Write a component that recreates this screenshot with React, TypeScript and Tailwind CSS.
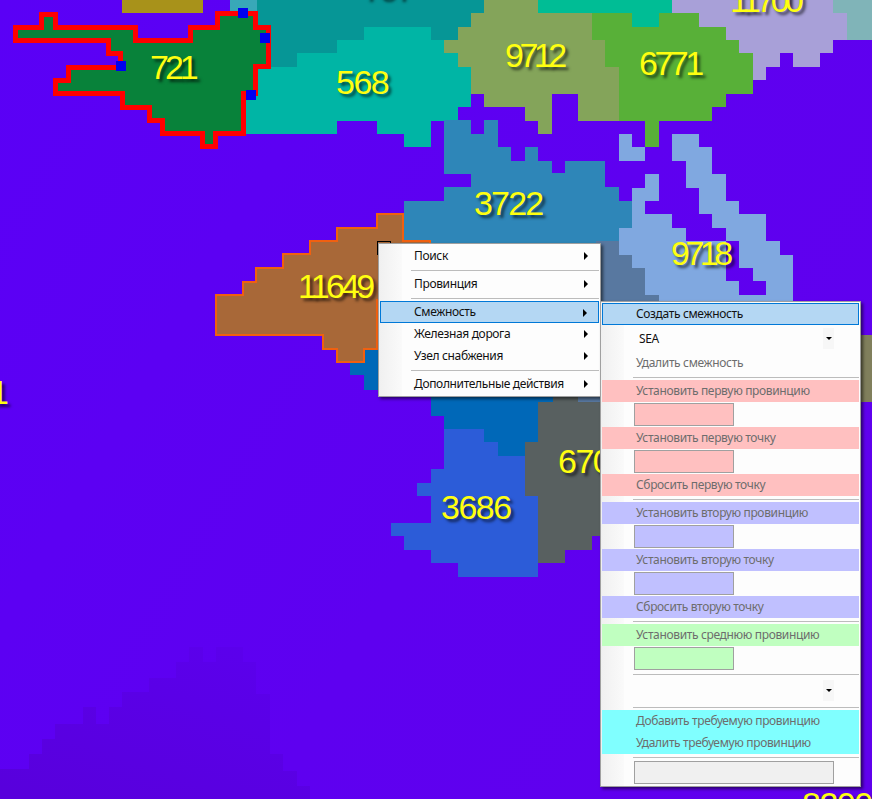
import type { ReactNode } from "react";

const regions = [
  { fill: "url(#seaShade)", points: "0,769 29,769 29,754 42,754 42,739 55,739 55,724 83,724 83,707 96,707 96,724 109,724 109,707 122,707 122,692 149,692 149,678 176,678 176,662 189,662 189,647 203,647 203,662 216,662 216,647 243,647 243,662 256,662 256,694 270,694 270,754 283,754 283,771 297,771 297,786 310,786 310,799 0,799" },
  { fill: "#a8921a", points: "122,0 203,0 203,13 122,13" },
  { fill: "#38a8b8", points: "230,0 257,0 257,13 230,13" },
  { fill: "#069696", points: "257,0 484,0 484,13 471,13 471,27 458,27 458,40 431,40 431,27 364,27 364,40 337,40 337,53 297,53 297,67 255,67 255,13 257,13" },
  { fill: "#00b5a5", points: "364,27 431,27 431,40 444,40 444,53 458,53 458,67 471,67 471,107 458,107 458,121 431,121 431,147 404,147 404,134 377,134 377,121 337,121 337,134 246,134 246,67 297,67 297,53 337,53 337,40 364,40" },
  { fill: "#00bd95", points: "538,0 672,0 672,13 659,13 659,27 632,27 632,13 538,13" },
  { fill: "#84a45a", points: "484,0 538,0 538,13 592,13 592,40 605,40 605,67 619,67 619,121 578,121 578,94 552,94 552,134 538,134 538,121 525,121 525,107 484,107 484,94 471,94 471,67 458,67 458,53 444,53 444,40 458,40 458,27 471,27 471,13 484,13" },
  { fill: "#58b038", points: "592,13 632,13 632,27 659,27 659,13 699,13 699,27 726,27 726,40 739,40 739,53 753,53 753,94 726,94 726,107 712,107 712,121 659,121 659,147 645,147 645,121 619,121 619,67 605,67 605,40 592,40" },
  { fill: "#a8a0d8", points: "672,0 833,0 833,13 847,13 847,40 833,40 833,53 820,53 820,67 793,67 793,53 780,53 780,67 766,67 766,80 753,80 753,53 739,53 739,40 726,40 726,27 699,27 699,13 672,13" },
  { fill: "#80b4b8", points: "833,0 872,0 872,40 847,40 847,13 833,13" },
  { fill: "#807f5c", points: "860,335 872,335 872,402 860,402" },
  { fill: "#2e86b8", points: "444,120 471,120 471,134 484,134 484,120 498,120 498,147 511,147 511,161 525,161 525,147 538,147 538,161 552,161 552,173 565,173 565,161 605,161 605,187 619,187 619,201 632,201 632,228 619,228 619,260 404,260 404,201 444,201 444,187 471,187 471,174 444,174" },
  { fill: "#80a8e0", points: "619,134 632,134 632,147 645,147 645,161 619,161" },
  { fill: "#80a8e0", points: "672,134 699,134 699,147 712,147 712,174 726,174 726,201 739,201 739,214 766,214 766,241 780,241 780,255 793,255 793,310 659,310 659,295 645,295 645,268 632,268 632,255 619,255 619,228 632,228 632,188 645,188 645,174 659,174 659,201 645,201 645,214 672,214 672,228 686,228 686,241 726,241 726,281 739,281 739,295 766,295 766,281 753,281 753,268 739,268 739,241 726,241 726,228 712,228 712,214 699,214 699,188 686,188 686,161 672,161" },
  { fill: "#5878a0", points: "596,241 619,241 619,255 632,255 632,268 645,268 645,295 659,295 659,310 596,310" },
  { fill: "#0068b8", points: "365,349 380,349 380,397 553,397 553,402 538,402 538,442 525,442 525,456 498,456 498,442 484,442 484,429 444,429 444,416 431,416 431,390 364,390 364,375 350,375 350,362 365,362" },
  { fill: "#586060", points: "553,395 605,395 605,536 592,536 592,550 565,550 565,563 538,563 538,496 525,496 525,442 538,442 538,402 553,402" },
  { fill: "#5878a0", points: "578,390 605,390 605,402 578,402" },
  { fill: "#2c5cd8", points: "444,429 484,429 484,442 498,442 498,456 525,456 525,496 538,496 538,577 458,577 458,563 431,563 431,550 404,550 404,536 391,536 391,523 431,523 431,496 417,496 417,483 431,483 431,469 444,469" },
];

const labels = [
  { text: "797", className: "left-[361px] top-[-30px] tracking-[-2.5px]" },
  { text: "11700", className: "left-[730px] top-[-17px] tracking-[-4.5px]" },
  { text: "721", className: "left-[150px] top-[50px] tracking-[-4px]" },
  { text: "568", className: "left-[336px] top-[65px] tracking-[-1.5px]" },
  { text: "9712", className: "left-[505px] top-[38px] tracking-[-4.5px]" },
  { text: "6771", className: "left-[639px] top-[46px] tracking-[-3.5px]" },
  { text: "3722", className: "left-[474px] top-[186px] tracking-[-1.8px]" },
  { text: "9718", className: "left-[671px] top-[236px] tracking-[-4.5px]" },
  { text: "11649", className: "left-[298px] top-[269px] tracking-[-3.7px]" },
  { text: "1", className: "left-[-10px] top-[375px]" },
  { text: "670", className: "left-[558px] top-[444px] tracking-[-1.5px]" },
  { text: "3686", className: "left-[441px] top-[490px] tracking-[-1.5px]" },
  { text: "8200", className: "left-[802px] top-[787px] tracking-[-1.5px]" },
];

function MapCanvas() {
  return (
    <>
      <svg width="872" height="799" viewBox="0 0 872 799" className="absolute left-0 top-0" shapeRendering="crispEdges">
        <defs>
          <linearGradient id="seaShade" x1="0.8" y1="0" x2="0.1" y2="1">
            <stop offset="0" stopColor="#5b00ec" />
            <stop offset="1" stopColor="#5800dc" />
          </linearGradient>
        </defs>
        {regions.map((r, i) => (
          <polygon key={i} points={r.points} fill={r.fill} />
        ))}
        <polygon
          points="216,295 243,295 243,282 256,282 256,268 283,268 283,254 310,254 310,241 337,241 337,228 377,228 377,214 403,214 403,241 430,241 430,300 377,300 377,349 364,349 364,362 337,362 337,349 323,349 323,335 216,335"
          fill="#a86838"
          stroke="#f06010"
          strokeWidth="2"
        />
        <polygon
          points="15,27 41,27 41,14 55,14 55,27 135,27 135,40 190,40 190,27 217,27 217,13 255,13 255,27 268,27 268,66 255,66 255,93 243,93 243,133 215,133 215,146 202,146 202,133 162,133 162,120 149,120 149,107 122,107 122,93 55,93 55,80 68,80 68,67 120,67 120,53 108,53 108,40 15,40"
          fill="#08823a"
          stroke="#ff0000"
          strokeWidth="5"
        />
        <rect x="238" y="8" width="10" height="10" fill="#0000f0" />
        <rect x="260" y="33" width="10" height="10" fill="#0000f0" />
        <rect x="116" y="61" width="10" height="10" fill="#0000f0" />
        <rect x="246" y="90" width="10" height="10" fill="#0000f0" />
        <rect x="377.5" y="241.5" width="13" height="13" fill="none" stroke="#000000" />
      </svg>
      {labels.map((l) => (
        <span
          key={l.text}
          className={`absolute font-['Liberation_Sans',Arial,sans-serif] text-[34px] leading-none text-[#ffff10] [text-shadow:3px_3px_3px_rgba(0,0,0,0.6)] ${l.className}`}
        >
          {l.text}
        </span>
      ))}
    </>
  );
}

function Arrow() {
  return (
    <svg width="4" height="8" viewBox="0 0 4 8" className="absolute right-[11px] top-[7px]">
      <path d="M0 0 L4 4 L0 8 Z" fill="#000000" />
    </svg>
  );
}

function Sep() {
  return (
    <div className="h-[6px] flex items-center pl-[31px]">
      <div className="h-px w-full bg-[#bcbcbc]" />
    </div>
  );
}

function Item({ children, className = "text-[#6d6d6d]" }: { children: ReactNode; className?: string }) {
  return <div className={`h-[22px] pl-[34px] leading-[21px] ${className}`}>{children}</div>;
}

function SubItem({ children, active }: { children: ReactNode; active?: boolean }) {
  return (
    <div
      className={`relative h-[22px] text-[#111111] ${
        active ? "border border-[#0078d7] bg-[#b4d7f3] pl-[33px] leading-[19px]" : "pl-[34px] leading-[21px]"
      }`}
    >
      {children}
      <Arrow />
    </div>
  );
}

function Field({ className }: { className: string }) {
  return (
    <div className="h-[25px] py-px pl-[32px]">
      <div className={`h-[23px] w-[100px] border border-[#a0a0a0] ${className}`} />
    </div>
  );
}

function Combo({ value }: { value?: string }) {
  return (
    <div className="h-[27px] py-[2px] pl-[32px]">
      <div className="flex h-[23px] w-[200px] items-center justify-between">
        <span className="pl-[5px] text-[#111111]">{value}</span>
        <span className="flex h-[21px] w-[11px] items-center justify-center bg-[#f7f7f7]">
          <svg width="6" height="3" viewBox="0 0 6 3">
            <path d="M0 0 L6 0 L3 3 Z" fill="#000000" />
          </svg>
        </span>
      </div>
    </div>
  );
}

const menuClass =
  "absolute border border-[#a0a0a0] bg-[linear-gradient(to_right,#f0f0f0,#fafafa_23px,#fdfdfd_23px)] p-px font-['Noto_Sans',sans-serif] text-[12px] tracking-[-0.35px] shadow-[2px_2px_3px_rgba(0,0,0,0.55)]";

export default function App() {
  return (
    <div className="relative h-[799px] w-[872px] overflow-hidden bg-[linear-gradient(120deg,#5a00f6,#5e00f0_55%,#6000ed)]">
      <MapCanvas />

      <div className={`${menuClass} left-[378px] top-[243px] h-[154px] w-[223px]`}>
        <SubItem>Поиск</SubItem>
        <Sep />
        <SubItem>Провинция</SubItem>
        <Sep />
        <SubItem active>Смежность</SubItem>
        <SubItem>Железная дорога</SubItem>
        <SubItem>Узел снабжения</SubItem>
        <Sep />
        <SubItem>Дополнительные действия</SubItem>
      </div>

      <div className={`${menuClass} left-[600px] top-[301px] h-[486px] w-[261px]`}>
        <div className="h-[22px] border border-[#0078d7] bg-[#b4d7f3] pl-[33px] leading-[19px] text-[#111111]">Создать смежность</div>
        <Combo value="SEA" />
        <Item>Удалить смежность</Item>
        <Sep />
        <Item className="bg-[#ffc0c0] text-[#6d6d6d]">Установить первую провинцию</Item>
        <Field className="bg-[#ffc0c0]" />
        <Item className="bg-[#ffc0c0] text-[#6d6d6d]">Установить первую точку</Item>
        <Field className="bg-[#ffc0c0]" />
        <Item className="bg-[#ffc0c0] text-[#6d6d6d]">Сбросить первую точку</Item>
        <Sep />
        <Item className="bg-[#c0c0ff] text-[#6d6d6d]">Установить вторую провинцию</Item>
        <Field className="bg-[#c0c0ff]" />
        <Item className="bg-[#c0c0ff] text-[#6d6d6d]">Установить вторую точку</Item>
        <Field className="bg-[#c0c0ff]" />
        <Item className="bg-[#c0c0ff] text-[#6d6d6d]">Сбросить вторую точку</Item>
        <Sep />
        <Item className="bg-[#c0ffc0] text-[#6d6d6d]">Установить среднюю провинцию</Item>
        <Field className="bg-[#c0ffc0]" />
        <Sep />
        <Combo />
        <Sep />
        <Item className="bg-[#80ffff] text-[#6d6d6d]">Добавить требуемую провинцию</Item>
        <Item className="bg-[#80ffff] text-[#6d6d6d]">Удалить требуемую провинцию</Item>
        <Sep />
        <div className="h-[25px] py-px pl-[32px]">
          <div className="h-[23px] w-[200px] border border-[#a0a0a0] bg-[#f0f0f0]" />
        </div>
      </div>
    </div>
  );
}
